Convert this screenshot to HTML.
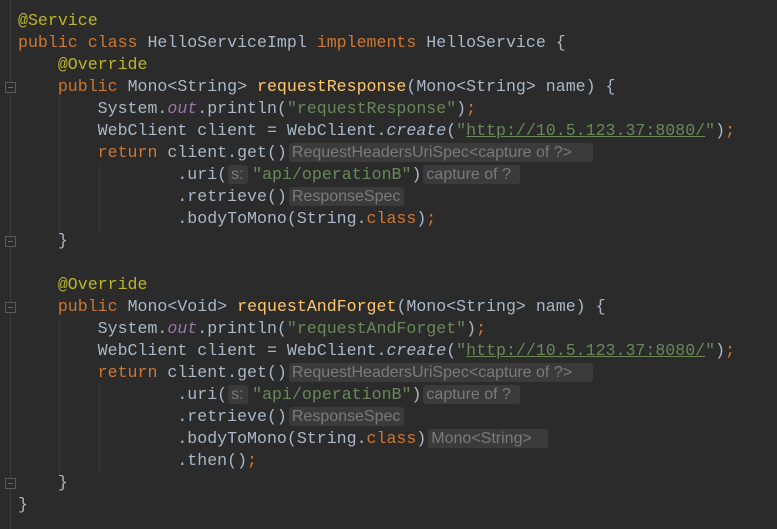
<!DOCTYPE html>
<html><head><style>
body{margin:0;width:777px;height:529px;background:#2b2b2b;overflow:hidden;position:relative;font-family:"Liberation Mono",monospace;font-size:16.6px;color:#a9b7c6}
.l{position:absolute;left:18px;height:22px;line-height:22px;white-space:pre}
.k{color:#cc7832}.a{color:#bbb529}.m{color:#ffc66d}.s{color:#6a8759}.f{color:#9876aa;font-style:italic}.i{font-style:italic}
.u{text-decoration:underline}
.h{display:inline-block;background:#3b3b3b;color:#7a7a7a;font-family:"Liberation Sans",sans-serif;font-size:16px;border-radius:3px;height:19px;line-height:19px;vertical-align:top;position:relative;top:1px;padding:0 3px;margin:0 2px;overflow:hidden;text-align:left}
.g{position:absolute;left:10px;top:0;width:1px;height:529px;background:#3c3c3c}
.ig{position:absolute;width:1px;background:#383838}
.fm{position:absolute;left:5px;width:9px;height:9px;border:1px solid #5a5a5a;background:#2b2b2b}
.fm:after{content:"";position:absolute;left:2px;top:4px;width:5px;height:1px;background:#6a6a6a}
</style></head><body>
<div class="g"></div>
<div class="ig" style="left:59px;top:97px;height:138px"></div>
<div class="ig" style="left:99px;top:163px;height:70px"></div>
<div class="ig" style="left:59px;top:317px;height:160px"></div>
<div class="ig" style="left:99px;top:383px;height:90px"></div>
<div class="fm" style="top:82px"></div>
<div class="fm" style="top:236px"></div>
<div class="fm" style="top:302px"></div>
<div class="fm" style="top:478px"></div>
<div class="l" style="top:10px"><span class="a">@Service</span></div>
<div class="l" style="top:32px"><span class="k">public class </span>HelloServiceImpl <span class="k">implements </span>HelloService {</div>
<div class="l" style="top:54px">    <span class="a">@Override</span></div>
<div class="l" style="top:76px">    <span class="k">public </span>Mono&lt;String&gt; <span class="m">requestResponse</span>(Mono&lt;String&gt; name) {</div>
<div class="l" style="top:98px">        System.<span class="f">out</span>.println(<span class="s">"requestResponse"</span>)<span class="k">;</span></div>
<div class="l" style="top:120px">        WebClient client = WebClient.<span class="i">create</span>(<span class="s">"<span class="u">http://10.5.123.37:8080/</span>"</span>)<span class="k">;</span></div>
<div class="l" style="top:142px">        <span class="k">return </span>client.get()<span class="h" style="width:298px">RequestHeadersUriSpec&lt;capture of ?&gt;</span></div>
<div class="l" style="top:164px">                .uri(<span class="h" style="width:14px;margin:0 4px 0 1px">s:</span><span class="s">"api/operationB"</span>)<span class="h" style="width:91px">capture of ?</span></div>
<div class="l" style="top:186px">                .retrieve()<span class="h" style="width:109px">ResponseSpec</span></div>
<div class="l" style="top:208px">                .bodyToMono(String.<span class="k">class</span>)<span class="k">;</span></div>
<div class="l" style="top:230px">    }</div>
<div class="l" style="top:274px">    <span class="a">@Override</span></div>
<div class="l" style="top:296px">    <span class="k">public </span>Mono&lt;Void&gt; <span class="m">requestAndForget</span>(Mono&lt;String&gt; name) {</div>
<div class="l" style="top:318px">        System.<span class="f">out</span>.println(<span class="s">"requestAndForget"</span>)<span class="k">;</span></div>
<div class="l" style="top:340px">        WebClient client = WebClient.<span class="i">create</span>(<span class="s">"<span class="u">http://10.5.123.37:8080/</span>"</span>)<span class="k">;</span></div>
<div class="l" style="top:362px">        <span class="k">return </span>client.get()<span class="h" style="width:298px">RequestHeadersUriSpec&lt;capture of ?&gt;</span></div>
<div class="l" style="top:384px">                .uri(<span class="h" style="width:14px;margin:0 4px 0 1px">s:</span><span class="s">"api/operationB"</span>)<span class="h" style="width:91px">capture of ?</span></div>
<div class="l" style="top:406px">                .retrieve()<span class="h" style="width:109px">ResponseSpec</span></div>
<div class="l" style="top:428px">                .bodyToMono(String.<span class="k">class</span>)<span class="h" style="width:114px">Mono&lt;String&gt;</span></div>
<div class="l" style="top:450px">                .then()<span class="k">;</span></div>
<div class="l" style="top:472px">    }</div>
<div class="l" style="top:494px">}</div>
</body></html>
